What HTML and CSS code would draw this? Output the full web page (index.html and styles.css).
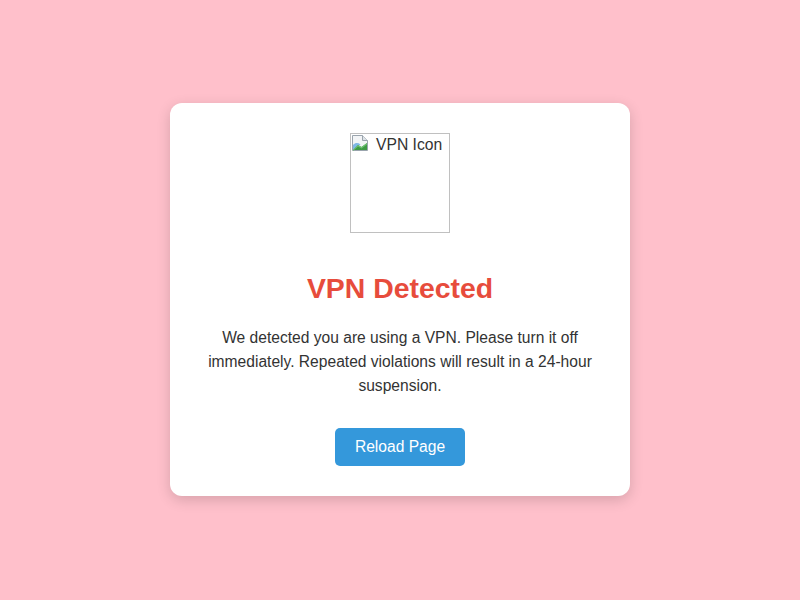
FILE: index.html
```html
<!DOCTYPE html>
<html lang="en">
<head>
<meta charset="utf-8">
<title>VPN Detected</title>
<link rel="stylesheet" href="styles.css">
</head>
<body>
<main class="card">
  <div class="icon-box" role="img" aria-label="VPN Icon">
    <svg class="broken" width="16" height="16" viewBox="0 0 16 16" aria-hidden="true">
      <path d="M0.5 0.5h10l5 5v10h-15z" fill="#f2f4f6" stroke="#9aa4ad"/>
      <path d="M10.5 0.5v5h5" fill="#dde2e6" stroke="#9aa4ad"/>
      <path d="M1 10c2.5-2.5 5-2.5 7.5-0.5l-7.5 5.5z" fill="#7fb8e6"/>
      <path d="M1 15l5-5 3.5 2 5.5-4v7z" fill="#3e9a44"/>
      <path d="M6 10l3.5 2 5.5-4v1.5l-5.5 4-3.5-2-5 4.5v-1z" fill="#6cc070"/>
    </svg>
    <span class="alt">VPN Icon</span>
  </div>
  <h1 class="title">VPN Detected</h1>
  <p class="message">We detected you are using a VPN. Please turn it off immediately. Repeated violations will result in a 24-hour suspension.</p>
  <button class="reload" type="button">Reload Page</button>
</main>
</body>
</html>
```

FILE: styles.css
```css
html, body {
  margin: 0;
  padding: 0;
}
body {
  background: #ffc0cb;
  font-family: "Liberation Sans", Arial, sans-serif;
  min-height: 600px;
  padding-top: 103px;
  box-sizing: border-box;
}
.card {
  box-sizing: border-box;
  width: 460px;
  margin: 0 auto;
  background: #ffffff;
  border-radius: 12px;
  box-shadow: 0 4px 14px rgba(0, 0, 0, 0.16);
  padding: 30px;
  display: flex;
  flex-direction: column;
  align-items: center;
  text-align: center;
}
.icon-box {
  box-sizing: border-box;
  width: 100px;
  height: 100px;
  border: 1px solid #c0c0c0;
  display: flex;
  align-items: flex-start;
  padding: 1px 0 0 1px;
  margin-bottom: 39px;
  color: #333333;
  font-size: 15.7px;
  line-height: 18px;
}
.broken {
  flex: none;
}
.alt {
  margin-left: 8px;
  padding-top: 1px;
}
.title {
  margin: 0 0 22px;
  font-size: 28.4px;
  line-height: 32px;
  font-weight: bold;
  color: #e74c3c;
}
.message {
  margin: 0 0 30px;
  font-size: 15.6px;
  line-height: 24px;
  color: #333333;
}
.reload {
  background: #3498db;
  color: #ffffff;
  border: none;
  border-radius: 5px;
  padding: 10px 20px;
  font-family: "Liberation Sans", Arial, sans-serif;
  font-size: 15.6px;
  line-height: 18px;
  cursor: pointer;
}
```
